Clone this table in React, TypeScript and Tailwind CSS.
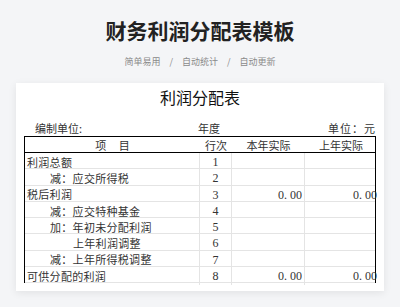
import React from "react";

const rows = [
  { name: "利润总额", indent: 0, no: "1", cur: "", prev: "" },
  { name: "减：应交所得税", indent: 1, no: "2", cur: "", prev: "" },
  { name: "税后利润", indent: 0, no: "3", cur: "0. 00", prev: "0. 00" },
  { name: "减：应交特种基金", indent: 1, no: "4", cur: "", prev: "" },
  { name: "加：年初未分配利润", indent: 1, no: "5", cur: "", prev: "" },
  { name: "上年利润调整", indent: 2, no: "6", cur: "", prev: "" },
  { name: "减：上年所得税调整", indent: 1, no: "7", cur: "", prev: "" },
  { name: "可供分配的利润", indent: 0, no: "8", cur: "0. 00", prev: "0. 00" },
];

const cjk = "font-['Noto_Sans_CJK_SC',sans-serif]";
const cols = "grid grid-cols-[175px_32px_73px_72px]";

function App() {
  return (
    <div className={`min-h-[307px] w-[400px] bg-[#f4f5f7] ${cjk} flex flex-col items-center pt-[16px]`}>
      <h1 className="text-[21px] leading-[28px] font-bold text-[#222]">财务利润分配表模板</h1>
      <div className="mt-[12px] flex items-center text-[9px] leading-[12px] text-[#8a8a8a]">
        <span>简单易用</span>
        <span className="mx-[9px]">/</span>
        <span>自动统计</span>
        <span className="mx-[9px]">/</span>
        <span>自动更新</span>
      </div>

      <div className="mt-[15px] w-[368px] bg-white px-[8px] pt-[4px] pb-[8px] shadow-[0_2px_8px_rgba(0,0,0,0.08)]">
        <div className="text-center text-[16px] leading-[20px] text-[#111]">利润分配表</div>

        <div className="mt-[14px] grid grid-cols-[174px_1fr_auto] text-[11px] leading-[15px] text-[#333]">
          <span className="pl-[11px]">编制单位:</span>
          <span>年度</span>
          <span className="tracking-[1px]">单位：元</span>
        </div>

        <div className="border-x-[1.5px] border-t border-black text-[11px] text-[#333]">
          <div className={`${cols} h-[16px] items-center border-b-[1.5px] border-black text-center`}>
            <span>项&nbsp;&nbsp;&nbsp;&nbsp;&nbsp;目</span>
            <span>行次</span>
            <span>本年实际</span>
            <span>上年实际</span>
          </div>
          {rows.map((r) => (
            <div key={r.no} className={`${cols} h-[16.25px] border-b border-[#e4e4e4]`}>
              <div
                className={`flex items-center border-r border-[#e4e4e4] tracking-[0.3px] ${
                  r.indent === 0 ? "pl-[2px]" : r.indent === 1 ? "pl-[25px]" : "pl-[48px]"
                }`}
              >
                {r.name}
              </div>
              <div className="flex items-center justify-center border-r border-[#e4e4e4] font-['Liberation_Serif',serif] text-[12px]">
                {r.no}
              </div>
              <div className="flex items-center justify-end whitespace-pre border-r border-[#e4e4e4] pr-[2px] font-['Liberation_Serif',serif] text-[12px]">
                {r.cur}
              </div>
              <div className="flex items-center justify-end whitespace-pre font-['Liberation_Serif',serif] text-[12px]">
                {r.prev}
              </div>
            </div>
          ))}
        </div>
      </div>
    </div>
  );
}

export default App;
